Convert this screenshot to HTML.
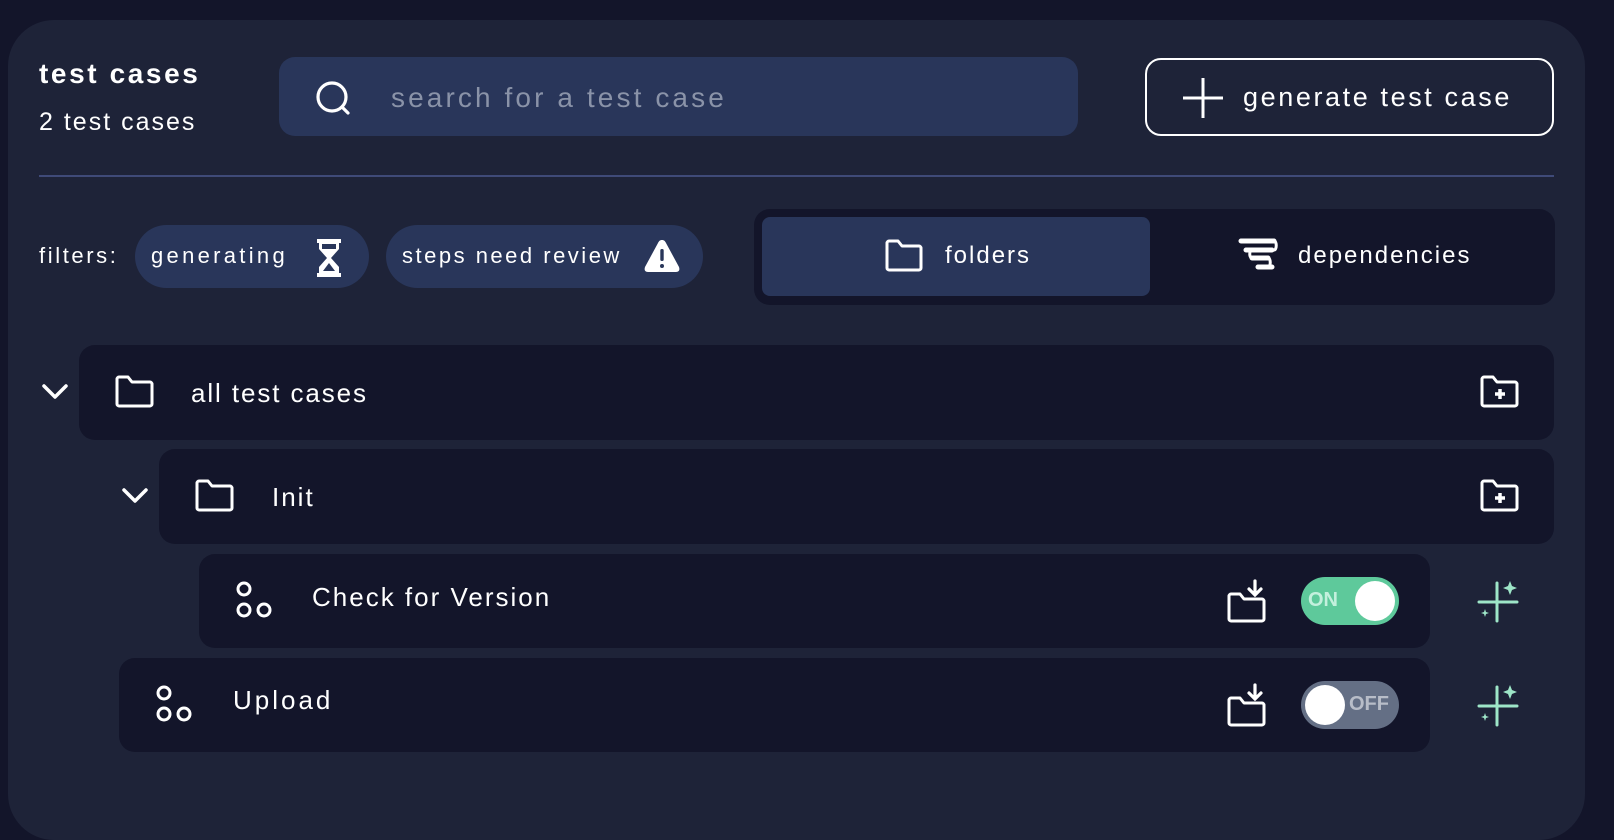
<!DOCTYPE html>
<html><head><meta charset="utf-8"><style>
*{margin:0;padding:0;box-sizing:border-box}
body{width:1614px;height:804px;background:#13152a;font-family:"Liberation Sans",sans-serif;color:#fff;position:relative;overflow:hidden}
.a{position:absolute}
.panel{left:8px;top:20px;width:1577px;height:820px;background:#1e2338;border-radius:46px}
.row{position:absolute;background:#13152a;border-radius:16px}
.t{position:absolute;white-space:nowrap}
svg{position:absolute;overflow:visible}
</style></head><body>
<div class="a panel"></div>
<div class="t" style="left:39px;top:58px;font-size:28px;font-weight:bold;letter-spacing:2.6px">test cases</div>
<div class="t" style="left:39px;top:108px;font-size:25px;letter-spacing:2px">2 test cases</div>

<div class="a" style="left:279px;top:57px;width:799px;height:79px;background:#29365a;border-radius:16px"></div>
<svg style="left:314px;top:79px" width="40" height="40" viewBox="0 0 40 40"><circle cx="18" cy="18" r="14" fill="none" stroke="#fff" stroke-width="3.2"/><path d="M28 28l6 6" stroke="#fff" stroke-width="3.2" stroke-linecap="round"/></svg>
<div class="t" style="left:391px;top:82px;font-size:28px;letter-spacing:3.1px;color:#8a93a8">search for a test case</div>

<div class="a" style="left:1145px;top:58px;width:409px;height:78px;border:2px solid #fff;border-radius:16px"></div>
<svg style="left:1183px;top:78px" width="40" height="40" viewBox="0 0 40 40"><path d="M20 0v40M0 20h40" stroke="#fff" stroke-width="3"/></svg>
<div class="t" style="left:1243px;top:82px;font-size:27px;letter-spacing:2.6px">generate test case</div>

<div class="a" style="left:39px;top:175px;width:1515px;height:2px;background:#3f4a78"></div>

<div class="t" style="left:39px;top:243px;font-size:22px;letter-spacing:2.6px">filters:</div>
<div class="a" style="left:135px;top:225px;width:234px;height:63px;background:#29365a;border-radius:32px"></div>
<div class="t" style="left:151px;top:243px;font-size:22px;letter-spacing:3.3px">generating</div>
<svg style="left:316px;top:238px" width="26" height="40" viewBox="0 0 26 40"><path d="M1 1h24v4h-2v6l-8 9 8 9v6h2v4H1v-4h2v-6l8-9-8-9V5H1z" fill="#fff"/><rect x="6" y="6" width="14" height="5" fill="#29365a"/><path d="M7 33l6-8 6 8z" fill="#29365a"/></svg>
<div class="a" style="left:386px;top:225px;width:317px;height:63px;background:#29365a;border-radius:32px"></div>
<div class="t" style="left:402px;top:243px;font-size:22px;letter-spacing:2.5px">steps need review</div>
<svg style="left:643px;top:238px" width="38" height="36" viewBox="0 0 38 36"><path d="M19 2c2 0 3 1 4 3l13 24c1 3 0 5-3 5H5c-3 0-4-2-3-5L15 5c1-2 2-3 4-3z" fill="#fff"/><rect x="17.3" y="11" width="3.4" height="12" rx="1.5" fill="#29365a"/><circle cx="19" cy="28" r="2" fill="#29365a"/></svg>

<div class="a" style="left:754px;top:209px;width:801px;height:96px;background:#13152a;border-radius:16px"></div>
<div class="a" style="left:762px;top:217px;width:388px;height:79px;background:#29365a;border-radius:8px"></div>
<svg style="left:884px;top:239px" width="40" height="34" viewBox="0 0 40 34"><path d="M3 4c0-1 1-2 2-2h9l4 5h17c1 0 2 1 2 2v20c0 1-1 2-2 2H5c-1 0-2-1-2-2z" fill="none" stroke="#fff" stroke-width="3" stroke-linejoin="round"/></svg>
<div class="t" style="left:945px;top:242px;font-size:24px;letter-spacing:2px">folders</div>
<svg style="left:1238px;top:238px" width="40" height="34" viewBox="0 0 40 34"><path d="M3 3h33M8 12h26M14 20h16M20 29h14" stroke="#fff" stroke-width="5" stroke-linecap="round"/><path d="M36 3c3 0 3 9 0 9M14 12c-3 0-3 8 0 8M30 20c3 0 3 9 0 9" stroke="#fff" stroke-width="3" fill="none"/></svg>
<div class="t" style="left:1298px;top:242px;font-size:24px;letter-spacing:2px">dependencies</div>

<div class="row" style="left:79px;top:345px;width:1475px;height:95px"></div>
<svg style="left:42px;top:384px" width="26" height="16" viewBox="0 0 26 16"><path d="M2 2l11 11L24 2" fill="none" stroke="#fff" stroke-width="3.5" stroke-linecap="round" stroke-linejoin="round"/></svg>
<svg style="left:115px;top:375px" width="40" height="34" viewBox="0 0 40 34"><path d="M2 4c0-1 1-2 2-2h9l4 5h18c1 0 2 1 2 2v20c0 1-1 2-2 2H4c-1 0-2-1-2-2z" fill="none" stroke="#fff" stroke-width="3" stroke-linejoin="round"/></svg>
<div class="t" style="left:191px;top:378px;font-size:26px;letter-spacing:1.9px">all test cases</div>
<svg style="left:1480px;top:375px" width="40" height="34" viewBox="0 0 40 34"><path d="M2 4c0-1 1-2 2-2h9l4 5h18c1 0 2 1 2 2v20c0 1-1 2-2 2H4c-1 0-2-1-2-2z" fill="none" stroke="#fff" stroke-width="3" stroke-linejoin="round"/><path d="M20 14v10M15 19h10" stroke="#fff" stroke-width="3.5"/></svg>

<div class="row" style="left:159px;top:449px;width:1395px;height:95px"></div>
<svg style="left:122px;top:488px" width="26" height="16" viewBox="0 0 26 16"><path d="M2 2l11 11L24 2" fill="none" stroke="#fff" stroke-width="3.5" stroke-linecap="round" stroke-linejoin="round"/></svg>
<svg style="left:195px;top:479px" width="40" height="34" viewBox="0 0 40 34"><path d="M2 4c0-1 1-2 2-2h9l4 5h18c1 0 2 1 2 2v20c0 1-1 2-2 2H4c-1 0-2-1-2-2z" fill="none" stroke="#fff" stroke-width="3" stroke-linejoin="round"/></svg>
<div class="t" style="left:272px;top:482px;font-size:26px;letter-spacing:2px">Init</div>
<svg style="left:1480px;top:479px" width="40" height="34" viewBox="0 0 40 34"><path d="M2 4c0-1 1-2 2-2h9l4 5h18c1 0 2 1 2 2v20c0 1-1 2-2 2H4c-1 0-2-1-2-2z" fill="none" stroke="#fff" stroke-width="3" stroke-linejoin="round"/><path d="M20 14v10M15 19h10" stroke="#fff" stroke-width="3.5"/></svg>

<div class="row" style="left:199px;top:554px;width:1231px;height:94px"></div>
<svg style="left:235px;top:581px" width="40" height="40" viewBox="0 0 40 40"><g fill="none" stroke="#fff" stroke-width="3"><circle cx="9" cy="8" r="6"/><circle cx="9" cy="29" r="6"/><circle cx="29" cy="29" r="6"/></g></svg>
<div class="t" style="left:312px;top:582px;font-size:26px;letter-spacing:2px">Check for Version</div>
<svg style="left:1227px;top:580px" width="40" height="44" viewBox="0 0 40 44"><path d="M2 16c0-1 1-2 2-2h9l4 5h18c1 0 2 1 2 2v18c0 1-1 2-2 2H4c-1 0-2-1-2-2z" fill="none" stroke="#fff" stroke-width="3" stroke-linejoin="round"/><path d="M28 1v13M22 9l6 6 6-6" fill="none" stroke="#fff" stroke-width="3.2" stroke-linecap="round"/></svg>
<div class="a" style="left:1301px;top:577px;width:98px;height:48px;background:#5ec99b;border-radius:24px"></div>
<div class="t" style="left:1308px;top:589px;font-size:20px;font-weight:bold;color:#c4f0dd">ON</div>
<div class="a" style="left:1355px;top:581px;width:40px;height:40px;background:#fff;border-radius:50%"></div>
<svg style="left:1477px;top:581px" width="44" height="44" viewBox="0 0 44 44"><path d="M20 2v38M2 21h38" stroke="#9ee6c8" stroke-width="3" stroke-linecap="round"/><path d="M33 0l2 5 5 2-5 2-2 5-2-5-5-2 5-2z" fill="#9ee6c8"/><path d="M8 28l1 3 3 1-3 1-1 3-1-3-3-1 3-1z" fill="#9ee6c8"/></svg>

<div class="row" style="left:119px;top:658px;width:1311px;height:94px"></div>
<svg style="left:155px;top:685px" width="40" height="40" viewBox="0 0 40 40"><g fill="none" stroke="#fff" stroke-width="3"><circle cx="9" cy="8" r="6"/><circle cx="9" cy="29" r="6"/><circle cx="29" cy="29" r="6"/></g></svg>
<div class="t" style="left:233px;top:685px;font-size:26px;letter-spacing:3px">Upload</div>
<svg style="left:1227px;top:684px" width="40" height="44" viewBox="0 0 40 44"><path d="M2 16c0-1 1-2 2-2h9l4 5h18c1 0 2 1 2 2v18c0 1-1 2-2 2H4c-1 0-2-1-2-2z" fill="none" stroke="#fff" stroke-width="3" stroke-linejoin="round"/><path d="M28 1v13M22 9l6 6 6-6" fill="none" stroke="#fff" stroke-width="3.2" stroke-linecap="round"/></svg>
<div class="a" style="left:1301px;top:681px;width:98px;height:48px;background:#646f85;border-radius:24px"></div>
<div class="a" style="left:1305px;top:685px;width:40px;height:40px;background:#fff;border-radius:50%"></div>
<div class="t" style="left:1349px;top:693px;font-size:20px;font-weight:bold;color:#b8bdc8">OFF</div>
<svg style="left:1477px;top:685px" width="44" height="44" viewBox="0 0 44 44"><path d="M20 2v38M2 21h38" stroke="#9ee6c8" stroke-width="3" stroke-linecap="round"/><path d="M33 0l2 5 5 2-5 2-2 5-2-5-5-2 5-2z" fill="#9ee6c8"/><path d="M8 28l1 3 3 1-3 1-1 3-1-3-3-1 3-1z" fill="#9ee6c8"/></svg>
</body></html>
